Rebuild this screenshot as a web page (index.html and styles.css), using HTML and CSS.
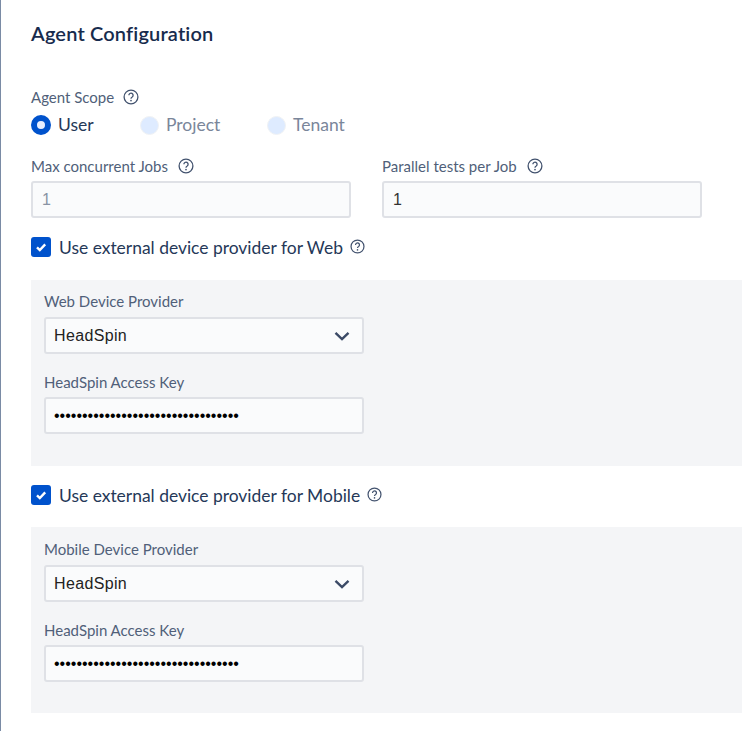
FILE: index.html
```html
<!DOCTYPE html>
<html lang="en">
<head>
<meta charset="utf-8">
<title>Agent Configuration</title>
<link rel="stylesheet" href="styles.css">
</head>
<body>
<svg class="sprite" width="0" height="0" aria-hidden="true">
  <symbol id="help" viewBox="0 0 16 16">
    <circle cx="8" cy="8" r="6.9" fill="none" stroke="currentColor" stroke-width="1.3"/>
    <path d="M5.9 6.3a2.1 2.1 0 1 1 3.3 1.700c-.8.5-1.200.9-1.200 1.700" fill="none" stroke="currentColor" stroke-width="1.3"/>
    <circle cx="8" cy="11.6" r=".85" fill="currentColor"/>
  </symbol>
</svg>
<div class="mark mark-top"></div>
<div class="mark mark-mid"></div>
<main class="page">
  <h1 class="title">Agent Configuration</h1>

  <div class="label scope-label">Agent Scope <svg class="help"><use href="#help"/></svg></div>
  <div class="radios">
    <label class="radio radio-on"><span class="dot"></span>User</label>
    <label class="radio radio-off project"><span class="dot"></span>Project</label>
    <label class="radio radio-off"><span class="dot"></span>Tenant</label>
  </div>

  <div class="two-col">
    <div class="col">
      <div class="label">Max concurrent Jobs <svg class="help"><use href="#help"/></svg></div>
      <input class="field field-disabled" value="1" disabled>
    </div>
    <div class="col">
      <div class="label">Parallel tests per Job <svg class="help"><use href="#help"/></svg></div>
      <input class="field" value="1">
    </div>
  </div>

  <label class="check">
    <span class="box"><svg viewBox="0 0 20 20" width="20" height="20"><path d="M6 10.3l2.8 2.7L14.2 7.4" fill="none" stroke="#fff" stroke-width="2.4"/></svg></span>
    Use external device provider for Web <svg class="help help-check"><use href="#help"/></svg>
  </label>
  <section class="panel">
    <div class="label">Web Device Provider</div>
    <div class="select">
      <span>HeadSpin</span>
      <svg class="chev" viewBox="0 0 16 10" width="16" height="10"><path d="M1.5 1.8L8 8l6.500-6.200" fill="none" stroke="#3b4a66" stroke-width="2.400"/></svg>
    </div>
    <div class="label key-label">HeadSpin Access Key</div>
    <input class="field field-key" type="password" value="123456789012345678901234567890123">
  </section>

  <label class="check">
    <span class="box"><svg viewBox="0 0 20 20" width="20" height="20"><path d="M6 10.3l2.8 2.7L14.2 7.4" fill="none" stroke="#fff" stroke-width="2.4"/></svg></span>
    Use external device provider for Mobile <svg class="help help-check"><use href="#help"/></svg>
  </label>
  <section class="panel panel-second">
    <div class="label">Mobile Device Provider</div>
    <div class="select">
      <span>HeadSpin</span>
      <svg class="chev" viewBox="0 0 16 10" width="16" height="10"><path d="M1.5 1.8L8 8l6.500-6.200" fill="none" stroke="#3b4a66" stroke-width="2.400"/></svg>
    </div>
    <div class="label key-label">HeadSpin Access Key</div>
    <input class="field field-key" type="password" value="123456789012345678901234567890123">
  </section>
</main>
</body>
</html>
```
FILE: styles.css
```css
* { box-sizing: border-box; }
html, body { margin: 0; height: 100%; overflow: hidden; background: #fff; }
body { font-family: Lato, "Noto Sans", sans-serif; color: #172b4d; border-left: 1px solid #7a8ba5; position: relative; }
.sprite { position: absolute; }
.mark { position: absolute; left: -1px; width: 1px; background: #0b2350; }
.mark-top { top: 0; height: 13px; }
.mark-mid { top: 320px; height: 13px; }
.page { padding: 20px 0 0 30px; }
.title { margin: 0; font-size: 20px; line-height: 26px; font-weight: 600; letter-spacing: .16px; color: #172b4d; }
.label { display: flex; align-items: center; font-size: 15px; line-height: 20px; color: #505f79; }
.help { width: 16px; height: 16px; margin-left: 9px; color: #42526e; flex: none; }
.scope-label { margin-top: 41px; }
.radios { display: flex; margin-top: 7px; height: 22px; align-items: center; }
.radio { display: flex; align-items: center; font-size: 17.5px; line-height: 22px; width: 109px; }
.radio.project { width: 127px; }
.dot { width: 19px; height: 19px; border-radius: 50%; margin-right: 7px; flex: none; }
.radio-on { color: #253858; }
.radio-on .dot { width: 20px; height: 20px; border: 6px solid #0052cc; background-clip: padding-box; background-color: #e8eeff; }
.radio-off { color: #7a869a; }
.radio-off .dot { background: #deebff; border: 1px solid #f0f2f5; }
.two-col { display: flex; margin-top: 20px; gap: 31px; }
.col { width: 320px; }
.col .label { margin-bottom: 5px; }
.col .help { margin-left: 10px; }
.field { display: block; width: 320px; height: 37px; padding: 0 9px; border: 2px solid #dfe1e6; border-radius: 3px; background: #fafbfc; font-family: "Liberation Sans", Arial, sans-serif; font-size: 16px; color: #333; outline: none; }
.field-disabled { color: #8993a4; }
.check { display: flex; align-items: center; height: 20px; margin-top: 19px; font-size: 17.45px; color: #253858; }
.box { width: 20px; height: 20px; margin-right: 8px; border-radius: 3px; background: #0052cc; flex: none; }
.box svg { display: block; }
.help-check { margin-left: 7px; width: 15px; height: 15px; margin-top: -2px; }
.panel { margin-top: 23px; height: 186px; padding: 11px 13px 0; background: #f4f5f7; }
.panel .label { margin-bottom: 6px; }
.panel .key-label { margin-top: 18px; margin-bottom: 5px; }
.panel-second { margin-top: 22px; padding-top: 12px; }
.select { display: flex; align-items: center; justify-content: space-between; width: 320px; height: 37px; padding: 0 12px 0 8px; border: 2px solid #dfe1e6; border-radius: 3px; background: #fafbfc; font-family: "Liberation Sans", Arial, sans-serif; font-size: 16px; letter-spacing: .35px; color: #222; }
.field-key { padding-left: 8px; color: #000; }
```
